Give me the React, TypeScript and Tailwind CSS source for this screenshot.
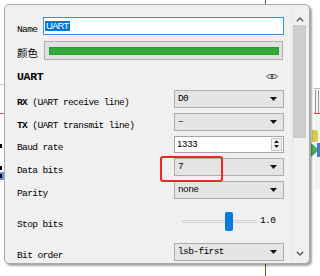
import React from "react";

const mono = "font-['Liberation_Mono','Noto_Sans_CJK_SC',monospace] text-[9.5px] tracking-[-0.6px] text-black leading-none";

function Caret() {
  return (
    <svg width="7" height="4" viewBox="0 0 7 4">
      <path d="M0 0h7L3.5 4z" fill="#111" />
    </svg>
  );
}

function Chevron({ up }: { up?: boolean }) {
  return (
    <svg width="8" height="5" viewBox="0 0 8 5">
      <path d={up ? "M0.8 4.2L4 1L7.2 4.2" : "M0.8 0.8L4 4L7.2 0.8"} fill="none" stroke="#5a5a5a" strokeWidth="1.4" />
    </svg>
  );
}

function Select({ value }: { value: string }) {
  return (
    <div className="flex h-[18px] w-[110px] items-center justify-between border border-[#adadad] bg-[#e5e5e5] pl-[3px] pr-[6px]">
      <span className={mono}>{value}</span>
      <Caret />
    </div>
  );
}

function Row({ h, label, children }: { h: string; label: React.ReactNode; children: React.ReactNode }) {
  return (
    <div className={"flex items-center " + h}>
      <div className="w-[157px]">{label}</div>
      {children}
    </div>
  );
}

export default function App() {
  return (
    <div className="relative h-[276px] w-[320px] overflow-hidden bg-white">
      {/* background canvas bits - left */}
      <div className="absolute left-0 top-[84px] h-px w-[4px] bg-[#c8c8c8]" />
      <div className="absolute left-0 top-[113px] h-px w-[4px] bg-[#e05050]" />
      <div className="absolute left-0 top-[144px] h-[4px] w-[2px] bg-black" />
      <div className="absolute left-0 top-[166px] h-[4px] w-[2px] bg-black" />
      <div className="absolute left-0 top-[172px] h-[8px] w-[4px] bg-[#6f8fe6]" />
      <div className="absolute left-0 top-[174px] h-[4px] w-[2px] bg-black" />
      {/* background canvas bits - right */}
      <div className="absolute left-[314px] top-[88px] h-[102px] w-[6px] bg-[#eef5ee]" />
      <div className="absolute left-[314px] top-[88px] h-px w-[6px] bg-[#b8b8b8]" />
      <div className="absolute left-[315px] top-[90px] h-[23px] w-px bg-[#9a9a9a]" />
      <div className="absolute left-[318px] top-[90px] h-[23px] w-px bg-[#9a9a9a]" />
      <div className="absolute left-[314px] top-[113px] h-px w-[6px] bg-[#e04040]" />
      <div className="absolute left-[312px] top-[130px] h-[12px] w-[6px] rounded-r-[3px] bg-[#d9cc4a]" />
      <svg className="absolute left-[311px] top-[143px]" width="8" height="14" viewBox="0 0 8 14">
        <path d="M0 0L8 7L0 14z" fill="#43b05a" />
      </svg>
      <div className="absolute left-[317px] top-[143px] h-[14px] w-[3px] bg-[#4a78d4]" />
      <div className="absolute left-[265px] top-0 h-[6px] w-px bg-[#3f6a2a]" />
      <div className="absolute left-[265px] top-[262px] h-[14px] w-px bg-[#3f6a2a]" />

      {/* popup panel */}
      <div className="absolute left-[4px] top-[4px] flex h-[260px] w-[306px] overflow-hidden rounded-[5px] border border-[#a9a9a9] bg-[#f0f0f0] shadow-[2px_2px_2px_rgba(0,0,0,0.35)]">
        <div className="flex w-[287px] flex-col overflow-hidden pl-[12px]">
          {/* Name */}
          <div className="mt-[12px] flex h-[18px] items-center">
            <div className="w-[26px]">
              <span className={mono}>Name</span>
            </div>
            <div className="flex h-[18px] w-[241px] items-center border border-[#3a8ee6] bg-white pl-[1px]">
              <span className="bg-[#0078d7] px-[1px] font-['Liberation_Sans',sans-serif] text-[9.5px] leading-[10px] tracking-[-0.8px] text-white">UART</span>
            </div>
          </div>
          {/* Color */}
          <div className="mt-[6px] flex h-[19px] items-center">
            <div className="w-[27px]">
              <span className="font-['Noto_Sans_CJK_SC',sans-serif] text-[10.5px] leading-none text-black">颜色</span>
            </div>
            <div className="flex h-[19px] w-[239px] items-center border border-[#adadad] bg-[#e1e1e1] pl-[4px] pr-[3px]">
              <div className="h-[8px] flex-1 border border-[#279a31] bg-[#31aa3b]" />
            </div>
          </div>
          {/* heading */}
          <div className="mt-[6px] flex h-[22px] w-[261px] items-center justify-between">
            <span className="font-['Liberation_Mono',monospace] text-[11.5px] font-bold leading-none tracking-[-0.3px] text-black">UART</span>
            <svg width="12" height="7" viewBox="0 0 12 7">
              <path d="M0.6 3.5C2.5 0.8 9.5 0.8 11.4 3.5C9.5 6.2 2.5 6.2 0.6 3.5z" fill="none" stroke="#444" strokeWidth="1" />
              <circle cx="6" cy="3.5" r="1.3" fill="#444" />
            </svg>
          </div>
          {/* rows */}
          <div className="mt-[1px] flex flex-col">
            <Row h="h-[22px]" label={<span className={mono}><b>RX</b> (UART receive line)</span>}>
              <Select value="D0" />
            </Row>
            <Row h="h-[23px]" label={<span className={mono}><b>TX</b> (UART transmit line)</span>}>
              <Select value="–" />
            </Row>
            <Row h="h-[22px]" label={<span className={mono}>Baud rate</span>}>
              <div className="flex h-[17px] w-[110px] items-center justify-between border border-[#a5a5a5] bg-white pl-[2px] pr-[1px]">
                <span className="font-['Liberation_Sans',sans-serif] text-[9.5px] leading-none tracking-[-0.2px] text-black">1333</span>
                <div className="flex h-[13px] w-[11px] flex-col items-center justify-center gap-[2px] border border-[#c4c4c4] bg-[#f3f3f3]">
                  <svg width="5" height="3" viewBox="0 0 5 3"><path d="M0 3h5L2.5 0z" fill="#222" /></svg>
                  <svg width="5" height="3" viewBox="0 0 5 3"><path d="M0 0h5L2.5 3z" fill="#222" /></svg>
                </div>
              </div>
            </Row>
            <Row h="h-[23px]" label={<span className={mono}>Data bits</span>}>
              <Select value="7" />
            </Row>
            <Row h="h-[23px]" label={<span className={mono}>Parity</span>}>
              <Select value="none" />
            </Row>
            <Row h="h-[40px]" label={<span className={mono}>Stop bits</span>}>
              <div className="flex w-[110px] items-center pl-[8px]">
                <div className="relative flex h-[19px] w-[75px] items-center">
                  <div className="h-[3px] w-full rounded-[1px] border border-[#d6d6d6] bg-[#e7e7e7]" />
                  <div className="absolute left-[43px] top-0 h-[19px] w-[8px] rounded-[2px] bg-[#0a7ad9]" />
                </div>
                <span className={mono + " ml-[3px]"}>1.0</span>
              </div>
            </Row>
            <Row h="h-[22px]" label={<span className={mono}>Bit order</span>}>
              <Select value="lsb-first" />
            </Row>
          </div>
        </div>
        {/* scrollbar */}
        <div className="flex w-[14px] flex-col border-l border-[#e4e4e4]">
          <div className="flex h-[20px] items-end justify-center pb-[3px]">
            <Chevron up />
          </div>
          <div className="h-[113px] w-full bg-[#cdcdcd]" />
          <div className="flex-1" />
          <div className="flex h-[20px] items-start justify-center pt-[8px]">
            <Chevron />
          </div>
        </div>
      </div>

      {/* red annotation box */}
      <div className="absolute left-[160px] top-[156px] h-[26px] w-[63px] rounded-[3px] border-2 border-[#f22424]" />
    </div>
  );
}
